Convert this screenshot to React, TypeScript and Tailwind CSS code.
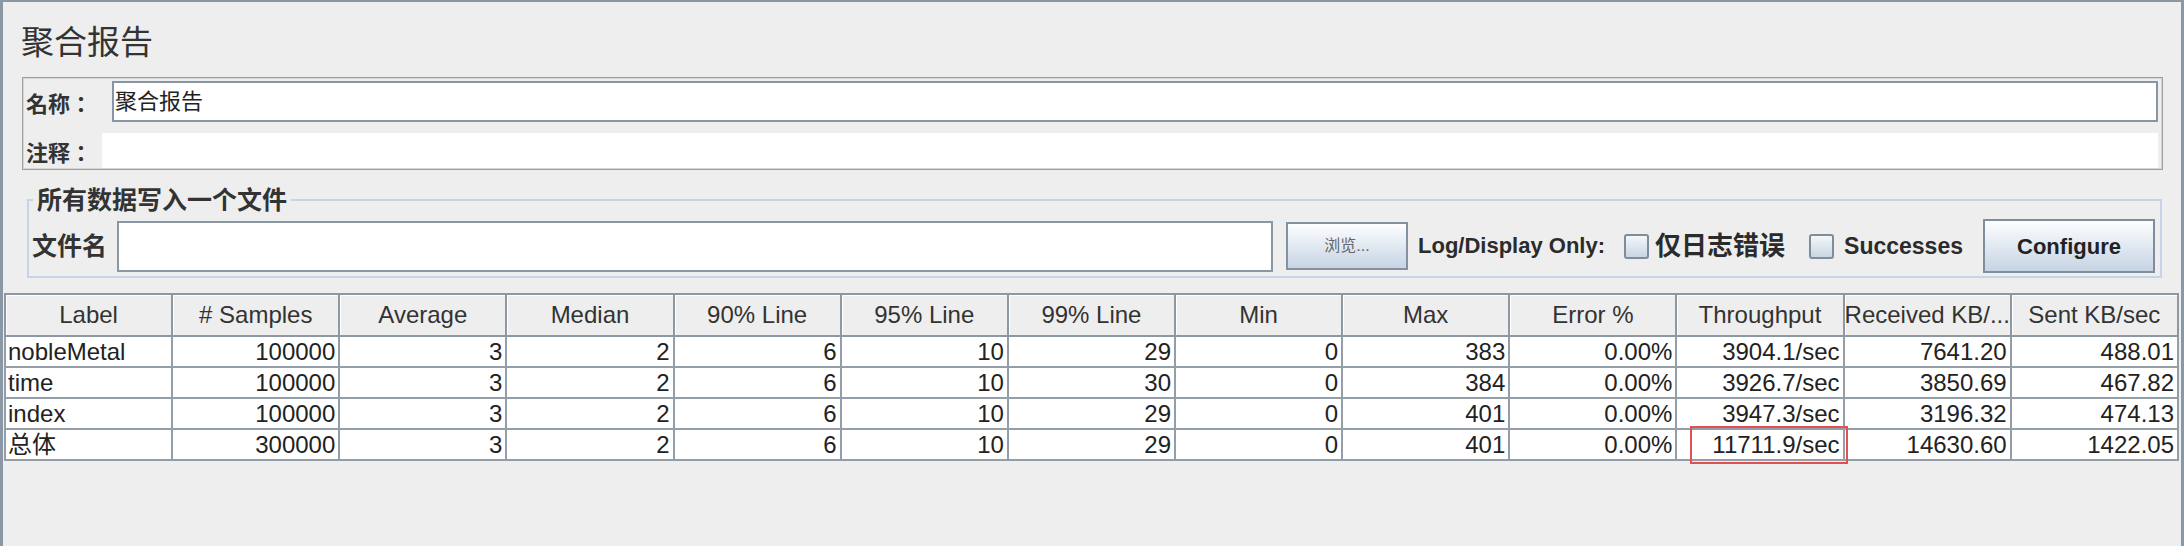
const headers = [
  'Label',
  '# Samples',
  'Average',
  'Median',
  '90% Line',
  '95% Line',
  '99% Line',
  'Min',
  'Max',
  'Error %',
  'Throughput',
  'Received KB/...',
  'Sent KB/sec',
];

const rows = [
  ['nobleMetal', '100000', '3', '2', '6', '10', '29', '0', '383', '0.00%', '3904.1/sec', '7641.20', '488.01'],
  ['time', '100000', '3', '2', '6', '10', '30', '0', '384', '0.00%', '3926.7/sec', '3850.69', '467.82'],
  ['index', '100000', '3', '2', '6', '10', '29', '0', '401', '0.00%', '3947.3/sec', '3196.32', '474.13'],
  ['总体', '300000', '3', '2', '6', '10', '29', '0', '401', '0.00%', '11711.9/sec', '14630.60', '1422.05'],
];

const font = "font-['Liberation_Sans','Noto_Sans_CJK_SC',sans-serif]";
const labelFont = "font-['Noto_Sans_CJK_TC','Noto_Sans_CJK_SC',sans-serif]";

function Checkbox() {
  return (
    <span className="block w-[25px] h-[25px] shrink-0 rounded-[3px] border-2 border-[#7f8c99] bg-gradient-to-b from-[#f4f7fa] to-[#c9d6e3]" />
  );
}

export default function App() {
  return (
    <div
      className={`${font} relative w-[2184px] h-[546px] overflow-hidden bg-[#eeeeee] border-t-2 border-l-[3px] border-r-[3px] border-[#8a97a5] text-[#2b2b2b]`}
    >
      <h1 className="mt-[24px] ml-[18px] text-[33px] leading-[33px] font-normal text-[#333]">聚合报告</h1>

      <div className="mt-[18px] ml-[19px] mr-[18px] border border-[#9f9f9f] shadow-[inset_0_0_0_1px_#d6d6d6] pt-[3px] pl-[3px] pr-[4px] pb-px">
        <div className="flex items-center h-[41px]">
          <span className={`${labelFont} w-[86px] shrink-0 text-[22px] font-bold leading-none text-[#333]`}>名称：</span>
          <div className="flex-1 h-full border-2 border-[#8795a4] bg-white flex items-center pl-px text-[22px] leading-none text-[#222]">
            聚合报告
          </div>
        </div>
        <div className="flex items-center h-[35px] mt-[11px]">
          <span className={`${labelFont} w-[76px] shrink-0 text-[22px] font-bold leading-none text-[#333]`}>注释：</span>
          <div className="flex-1 h-full bg-white" />
        </div>
      </div>

      <fieldset className="mt-[18px] ml-[24px] mr-[19px] border-2 border-[#c5d5e5] pl-[3px] pr-[5px] pb-[3px]">
        <legend className="ml-px px-[4px] text-[25px] leading-[24px] font-bold text-[#333]">所有数据写入一个文件</legend>
        <div className="flex items-center h-[54px] mt-[7px]">
          <span className="text-[25px] font-bold leading-none text-[#333] w-[85px] shrink-0">文件名</span>
          <div className="w-[1156px] shrink-0 h-[51px] border-2 border-[#8a97a5] bg-white" />
          <button className="ml-[13px] w-[122px] h-[48px] shrink-0 border-2 border-[#8391a0] bg-gradient-to-b from-[#fdfeff] to-[#c6d4e4] text-[16px] text-[#666]">
            浏览...
          </button>
          <span className="ml-[10px] text-[22px] font-bold leading-none text-[#2b2b2b] whitespace-nowrap">Log/Display Only:</span>
          <span className="ml-[19px]">
            <Checkbox />
          </span>
          <span className="ml-[6px] text-[26px] font-bold leading-none text-[#2b2b2b] whitespace-nowrap">仅日志错误</span>
          <span className="ml-[24px]">
            <Checkbox />
          </span>
          <span className="ml-[10px] text-[23px] font-bold leading-none text-[#2b2b2b] whitespace-nowrap">Successes</span>
          <button className="ml-auto w-[172px] h-[54px] shrink-0 border-2 border-[#7f8e9e] bg-gradient-to-b from-[#fdfeff] to-[#c6d4e4] text-[22px] font-bold text-[#222]">
            Configure
          </button>
        </div>
      </fieldset>

      <div className="relative mt-[15px] ml-px w-[2175px]">
        <table className="w-full table-fixed border-collapse text-[24px] leading-none">
          <thead>
            <tr className="h-[42px] bg-[#eeeeee]">
              {headers.map((h) => (
                <th
                  key={h}
                  className="border-2 border-[#8e98a3] font-normal text-center text-[#333] whitespace-nowrap overflow-hidden shadow-[inset_1px_1px_0_#ffffff]"
                >
                  {h}
                </th>
              ))}
            </tr>
          </thead>
          <tbody>
            {rows.map((r) => (
              <tr key={r[0]} className="h-[31px] bg-white">
                {r.map((c, i) => (
                  <td
                    key={i}
                    className={`border-2 border-[#949ea9] text-[#222] whitespace-nowrap ${i === 0 ? 'text-left pl-[2px]' : 'text-right pr-[3px]'}`}
                  >
                    {c}
                  </td>
                ))}
              </tr>
            ))}
          </tbody>
        </table>
        <div className="absolute left-[1686px] top-[133px] w-[158px] h-[38px] border-2 border-[#e05252] pointer-events-none" />
      </div>
    </div>
  );
}
